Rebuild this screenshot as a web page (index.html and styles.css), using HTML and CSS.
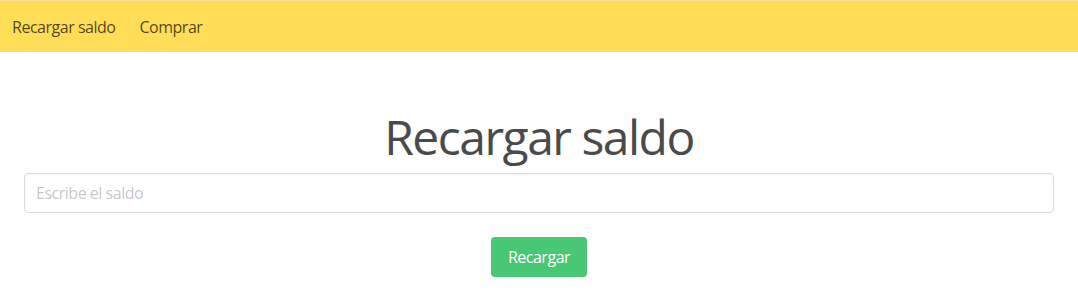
FILE: index.html
```html
<!DOCTYPE html>
<html lang="es">
<head>
<meta charset="utf-8">
<title>Recargar saldo</title>
<link rel="stylesheet" href="styles.css">
</head>
<body>
<nav class="navbar">
  <a class="navbar-item" href="#">Recargar saldo</a>
  <a class="navbar-item" href="#">Comprar</a>
</nav>
<section class="section">
  <h1 class="title">Recargar saldo</h1>
  <input class="input" type="text" placeholder="Escribe el saldo">
  <div class="actions">
    <button class="button" type="button">Recargar</button>
  </div>
</section>
</body>
</html>
```
FILE: styles.css
```css
html, body {
  margin: 0;
  padding: 0;
  background: #fff;
}
body {
  font-family: "Open Sans", "Noto Sans", sans-serif;
  font-size: 16px;
  letter-spacing: -0.48px;
  color: #4a4a4a;
}
.navbar {
  display: flex;
  align-items: stretch;
  height: 52px;
  background: #ffdd57;
  border-top: 1px solid #f6e29a;
  box-sizing: border-box;
}
.navbar-item {
  display: flex;
  align-items: center;
  padding: 0 12px;
  color: rgba(0, 0, 0, 0.7);
  text-decoration: none;
  font-size: 16px;
}
.section {
  padding: 58px 24px 24px;
}
.title {
  margin: 0 0 9px;
  font-size: 48px;
  font-weight: 400;
  line-height: 54px;
  letter-spacing: -1.5px;
  text-align: center;
  color: #4a4a4a;
}
.input {
  display: block;
  width: 100%;
  box-sizing: border-box;
  height: 40px;
  padding: 0 11px;
  border: 1px solid #dbdbdb;
  border-radius: 4px;
  font-family: inherit;
  font-size: 16px;
  letter-spacing: inherit;
  color: #363636;
  box-shadow: inset 0 1px 2px rgba(10, 10, 10, 0.05);
  outline: none;
}
.input::placeholder {
  color: rgba(54, 54, 54, 0.3);
}
.actions {
  display: flex;
  justify-content: center;
  margin-top: 24px;
}
.button {
  height: 40px;
  padding: 0 16px;
  border: 1px solid transparent;
  border-radius: 4px;
  background: #48c774;
  color: #fff;
  font-family: inherit;
  font-size: 16px;
  letter-spacing: inherit;
  cursor: pointer;
}
```
